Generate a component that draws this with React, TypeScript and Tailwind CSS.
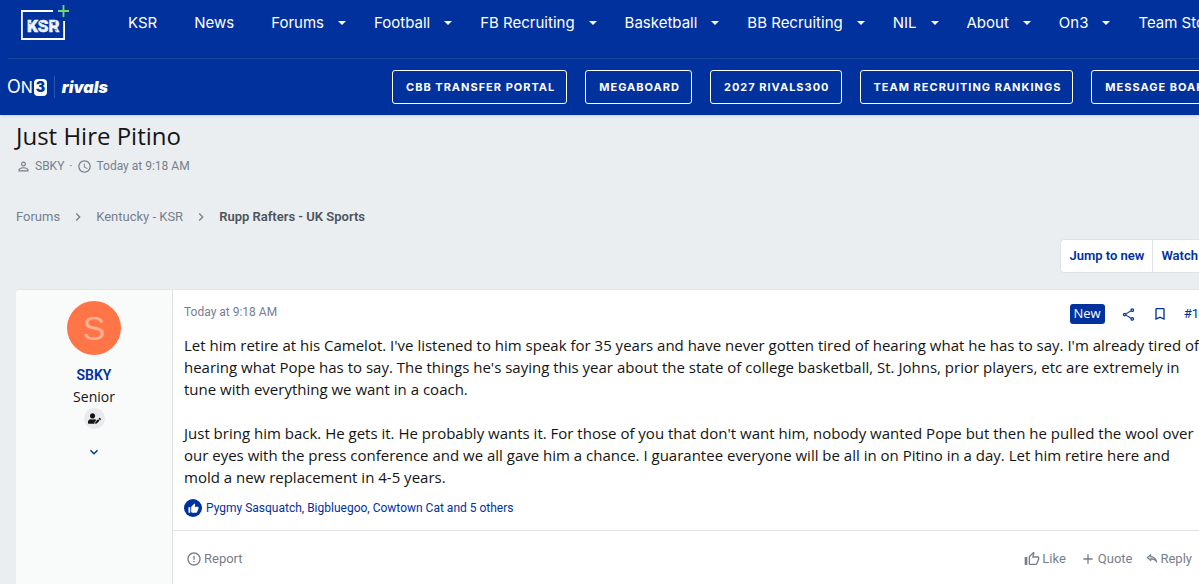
import React from "react";
import {
  MdAccessTime,
  MdAdd,
  MdBookmarkBorder,
  MdChevronRight,
  MdErrorOutline,
  MdExpandMore,
  MdOutlineShare,
  MdOutlineThumbUp,
  MdPersonOutline,
  MdThumbUp,
} from "react-icons/md";
import { FaUserEdit } from "react-icons/fa";

const NAV: { label: string; menu: boolean }[] = [
  { label: "KSR", menu: false },
  { label: "News", menu: false },
  { label: "Forums", menu: true },
  { label: "Football", menu: true },
  { label: "FB Recruiting", menu: true },
  { label: "Basketball", menu: true },
  { label: "BB Recruiting", menu: true },
  { label: "NIL", menu: true },
  { label: "About", menu: true },
  { label: "On3", menu: true },
  { label: "Team Stores", menu: true },
];

const LINKS = [
  "CBB TRANSFER PORTAL",
  "MEGABOARD",
  "2027 RIVALS300",
  "TEAM RECRUITING RANKINGS",
  "MESSAGE BOARDS",
];

function Caret() {
  return (
    <svg width="8" height="4" viewBox="0 0 8 4" fill="currentColor" aria-hidden="true">
      <path d="M0 0h8L4 4z" />
    </svg>
  );
}

function KsrLogo() {
  return (
    <svg width="50" height="36" viewBox="0 0 50 36" role="img" aria-label="KSR plus">
      <path d="M33 6H1.900V34H44.100V16" fill="none" stroke="#fff" strokeWidth="1.800" />
      <path d="M43.500 0v12M38 6h11" fill="none" stroke="#6fdc6a" strokeWidth="1.800" />
      <text
        x="7"
        y="27"
        fill="#eef3ff"
        stroke="#eef3ff"
        strokeWidth="0.500"
        fontSize="17"
        fontWeight="900"
        fontFamily="Roboto, sans-serif"
      >
        KSR
      </text>
      <path d="M20 17l3 2M31 18l5-1M32 24l5 1M21 24l4-2M9 18l2 1" stroke="#00319c" strokeWidth="0.700" />
    </svg>
  );
}

function ReplyIcon() {
  return (
    <svg width="12" height="11" viewBox="0 0 14 12" fill="none" stroke="currentColor" strokeWidth="1.300" strokeLinejoin="round" aria-hidden="true">
      <path d="M5.500 1.500L1.500 5l4 3.500V6.500c3.500 0 5.500 1 7 3.500-.8-3.500-3-5.800-7-6.300z" fill="currentColor" fillOpacity="0.350" />
    </svg>
  );
}

export default function App() {
  return (
    <div className="min-h-screen overflow-x-hidden bg-[#ebeef1] font-['Open_Sans',sans-serif] text-[#141414]">
      <header className="h-[115px] overflow-hidden whitespace-nowrap bg-[#00319c] pl-2 text-white shadow-sm">
        <div className="flex h-[59px] items-start border-b border-[#1a469f]">
          <a href="#home" className="mt-[5px] ml-3 w-[108px] shrink-0">
            <KsrLogo />
          </a>
          <nav aria-label="Main" className="flex h-[46px] items-center font-['Inter',sans-serif] text-[15px]">
            {NAV.map((item) => (
              <a
                key={item.label}
                href="#menu"
                className={item.menu ? "flex shrink-0 items-center gap-[14px] pr-7" : "shrink-0 pr-[37px]"}
              >
                {item.label}
                {item.menu && <Caret />}
              </a>
            ))}
          </nav>
        </div>
        <div className="flex h-14 items-center">
          <div className="flex w-[384px] shrink-0 items-center">
            <a href="#on3" className="-ml-px flex items-center font-['Inter',sans-serif]">
              <span className="text-lg leading-5">O</span>
              <span className="text-base leading-5">N</span>
              <span className="ml-px flex h-[17px] w-[13px] items-center justify-center rounded bg-white text-sm font-black text-[#00319c]">
                3
              </span>
            </a>
            <a
              href="#rivals"
              className="ml-[7px] flex h-[22px] items-center border-l border-[#2a55ae] pl-[7px] font-['Inter',sans-serif] text-base font-black italic"
            >
              rivals
            </a>
          </div>
          <nav aria-label="Featured" className="flex gap-[18px] font-['Inter',sans-serif] text-[11px] font-bold tracking-[1px]">
            {LINKS.map((label) => (
              <a
                key={label}
                href="#featured"
                className="flex h-[34px] shrink-0 items-center rounded-[3px] border border-white pr-[11px] pl-[13px]"
              >
                {label}
              </a>
            ))}
          </nav>
        </div>
      </header>

      <main className="-mr-2 pl-4 font-['Roboto',sans-serif] text-[13px]">
        <h1 className="pt-1 font-['Open_Sans',sans-serif] text-2xl leading-[34px]">Just Hire Pitino</h1>
        <div className="mt-[3px] flex h-5 items-center text-xs text-[#76808c]">
          <MdPersonOutline className="mr-1 size-[15px]" />
          <a href="#sbky">SBKY</a>
          <span className="mx-[5px]">·</span>
          <MdAccessTime className="mr-1 size-[15px]" />
          <time>Today at 9:18 AM</time>
        </div>

        <nav aria-label="Breadcrumb" className="mt-[31px] flex h-5 items-center text-[#76808c]">
          <a href="#forums">Forums</a>
          <MdChevronRight className="mx-[10px] size-4" />
          <a href="#kentucky">Kentucky - KSR</a>
          <MdChevronRight className="mx-[10px] size-4" />
          <a href="#rupp" className="font-semibold text-[#4c545c]">Rupp Rafters - UK Sports</a>
        </nav>

        <div className="mt-3 flex justify-end font-semibold text-[#00319c]">
          <div className="flex h-[34px] rounded border border-[#dfe2e5] bg-white">
            <button className="px-2">Jump to new</button>
            <button className="border-l border-[#dfe2e5] px-2">Watch</button>
          </div>
        </div>

        <article className="mt-4 flex rounded border-t border-[#e3e5e7] bg-white">
          <aside className="flex w-[157px] shrink-0 flex-col items-center rounded-l border-r border-[#dfe1e3] bg-[#f9fafa] pt-[11px]">
            <div className="flex size-[54px] items-center justify-center rounded-full bg-[#ff7547] font-['Liberation_Sans',sans-serif] text-[34px] text-[#ffb094]">
              S
            </div>
            <a href="#sbky" className="mt-[9px] text-sm leading-[22px] font-semibold text-[#00319c]">SBKY</a>
            <span className="font-['Open_Sans',sans-serif] text-sm leading-[22px]">Senior</span>
            <span className="flex size-[21px] items-center justify-center rounded-full bg-[#e9eaec]">
              <FaUserEdit className="size-[13px]" />
            </span>
            <button aria-label="Show more" className="mt-[15px] text-[#00319c]">
              <MdExpandMore className="size-4" />
            </button>
          </aside>

          <div className="min-w-0 grow">
            <div className="pr-2 pl-[11px]">
              <div className="flex h-11 items-center justify-between text-[#76808c]">
                <time className="text-xs">Today at 9:18 AM</time>
                <div className="flex items-center pt-1 text-[#00319c]">
                  <span className="mr-4 flex h-5 items-center rounded-[3px] bg-[#00319c] px-1 font-['Open_Sans',sans-serif] text-[13px] text-white">
                    New
                  </span>
                  <button aria-label="Share" className="mr-4">
                    <MdOutlineShare className="size-[15px]" />
                  </button>
                  <button aria-label="Bookmark" className="mr-4">
                    <MdBookmarkBorder className="size-4" />
                  </button>
                  <a href="#post-1">#1</a>
                </div>
              </div>

              <div className="font-['Open_Sans',sans-serif] text-[15px] leading-[22px] whitespace-nowrap">
                <p>
                  Let him retire at his Camelot. I've listened to him speak for 35 years and have never gotten tired of hearing what he has to say. I'm already tired of
                  <br />
                  hearing what Pope has to say. The things he's saying this year about the state of college basketball, St. Johns, prior players, etc are extremely in
                  <br />
                  tune with everything we want in a coach.
                </p>
                <p className="mt-[22px]">
                  Just bring him back. He gets it. He probably wants it. For those of you that don't want him, nobody wanted Pope but then he pulled the wool over
                  <br />
                  our eyes with the press conference and we all gave him a chance. I guarantee everyone will be all in on Pitino in a day. Let him retire here and
                  <br />
                  mold a new replacement in 4-5 years.
                </p>
              </div>

              <div className="mt-[10px] flex h-5 items-center text-xs text-[#00319c]">
                <span className="mr-1 flex size-[18px] items-center justify-center rounded-full bg-[#00319c] text-white">
                  <MdThumbUp className="size-[11px]" />
                </span>
                <a href="#reactions">Pygmy Sasquatch, Bigbluegoo, Cowtown Cat and 5 others</a>
              </div>
            </div>

            <footer className="mt-3 flex h-14 items-center justify-between border-t border-[#dfe1e3] pr-[15px] pl-[13px] text-[#76808c]">
              <button className="flex items-center gap-[2px]">
                <MdErrorOutline className="size-4" />
                Report
              </button>
              <div className="flex gap-[14px]">
                <button className="flex items-center gap-[2px]">
                  <MdOutlineThumbUp className="size-4" />
                  Like
                </button>
                <button className="flex items-center gap-[2px]">
                  <MdAdd className="size-4" />
                  Quote
                </button>
                <button className="flex items-center gap-[2px]">
                  <ReplyIcon />
                  Reply
                </button>
              </div>
            </footer>
          </div>
        </article>
      </main>
    </div>
  );
}
